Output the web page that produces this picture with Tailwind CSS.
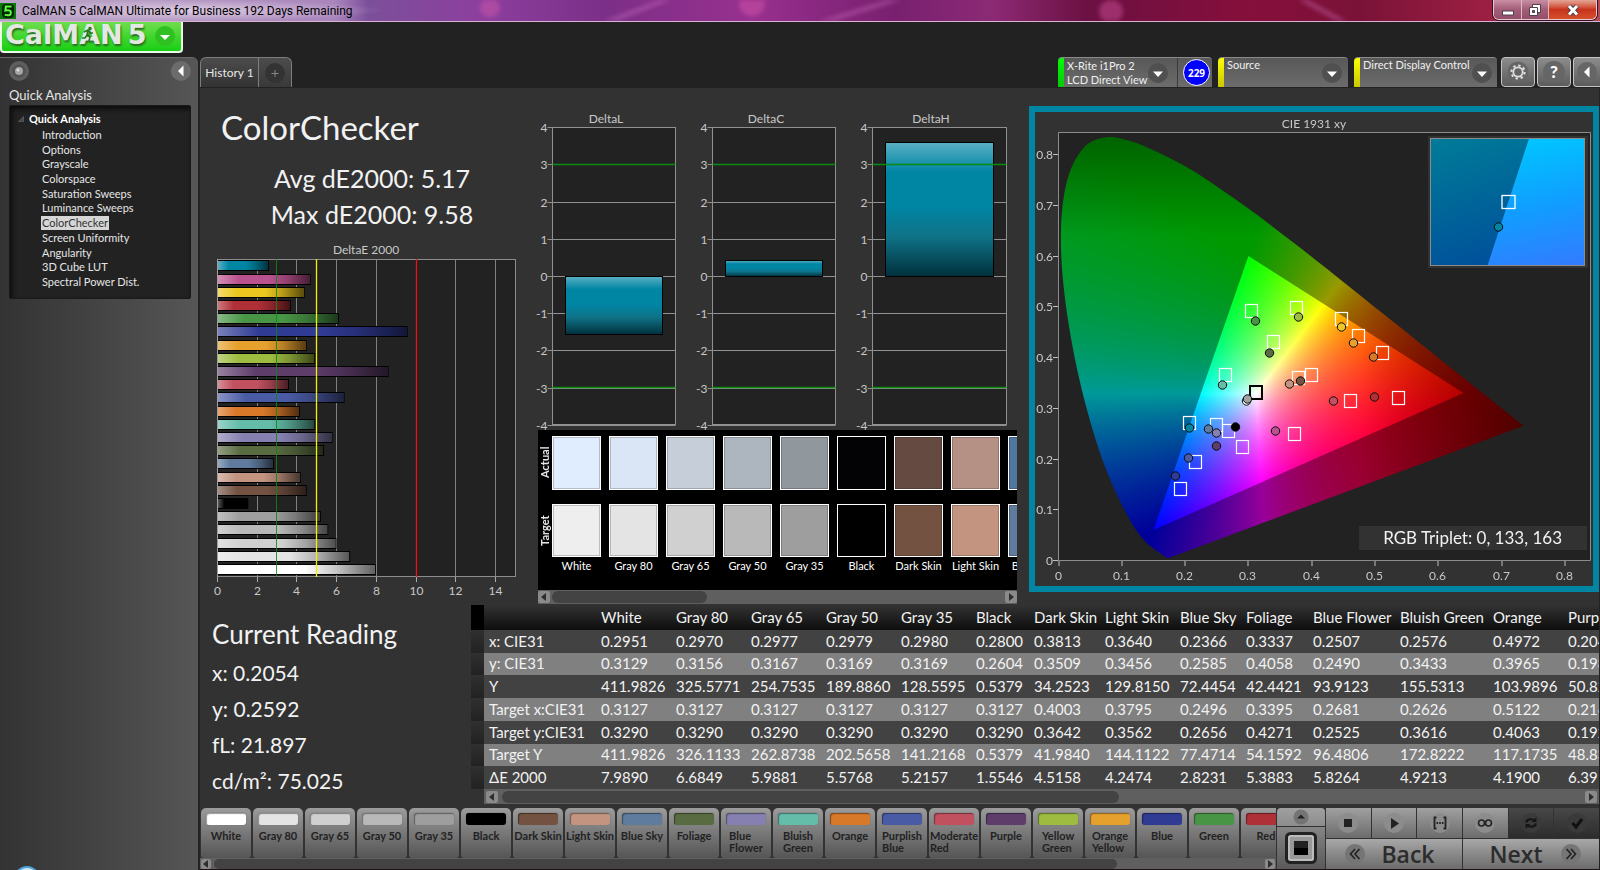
<!DOCTYPE html>
<html lang="en">
<head>
<meta charset="utf-8">
<title>CalMAN 5</title>
<script src="https://cdn.jsdelivr.net/npm/@tailwindcss/browser@4"></script>
</head>
<body class="flex min-h-screen flex-col overflow-x-hidden bg-[#222222] font-['Lato','Liberation_Sans',sans-serif] text-[#e6e6e6]">

<!-- window title bar -->
<header class="relative flex h-[22px] shrink-0 items-start justify-between overflow-hidden border-b border-[#d9b3d2] bg-[linear-gradient(90deg,#b9a3c4_0%,#b59bc4_10%,#a884bb_21%,#7c4f9a_23%,#8c3f9e_30%,#7c2f88_38%,#98308f_47%,#78206f_56%,#8c2a75_62%,#6c1042_68%,#860f3b_78%,#7a1238_85%,#9c1f42_93%,#b04a55_100%)]">
  <div class="flex h-[21px] items-center gap-1.5 bg-[radial-gradient(closest-side,#f0e2f0b0,#f0e2f000)] pr-8">
    <svg class="size-4" viewBox="0 0 16 16" aria-hidden="true"><rect width="16" height="16" fill="#0a7a0a"/><rect x="2" y="1" width="12" height="14" rx="4" fill="#032503"/><path d="M11.500 3.600H5.800L5.400 7.600q4-1.200 5.200.7 .9 3.700-2.300 4Q6.200 12.300 4.800 11.600" fill="none" stroke="#5cff3c" stroke-width="2"/></svg>
    <span class="font-['Roboto','Noto_Sans',sans-serif] text-[12px] leading-5 text-black">CalMAN 5 CalMAN Ultimate for Business 192 Days Remaining</span>
  </div>
  <svg class="absolute inset-0 h-full w-full blur-[2px]" viewBox="0 0 1600 22" preserveAspectRatio="none" aria-hidden="true">
    <g fill="none" stroke="#d070c0" stroke-opacity=".4" stroke-width="5"><path d="M605 24L670-2M820 24L900-2M1300-2L1345 24"/></g>
    <g fill="#e060b0" fill-opacity=".4"><circle cx="490" cy="8" r="10"/><circle cx="752" cy="4" r="13"/><circle cx="1111" cy="12" r="12"/></g>
  </svg>
  <div class="relative mr-[3px] flex h-5 overflow-hidden rounded-b-md border border-t-0 border-[#e8c8d0] shadow-[0_0_0_1px_#3a1020]">
    <button aria-label="Minimize" class="flex w-[28px] items-center justify-center border-r border-[#e0b8c4] bg-linear-to-b from-[#c98fa3] via-[#a35d78] to-[#93506b]"><svg class="h-4 w-4" viewBox="0 0 16 16"><rect x="2.500" y="9" width="11" height="4" fill="#fff" stroke="#50404a"/></svg></button>
    <button aria-label="Restore" class="flex w-[27px] items-center justify-center border-r border-[#e0b8c4] bg-linear-to-b from-[#c98fa3] via-[#a35d78] to-[#93506b]"><svg class="h-4 w-4" viewBox="0 0 16 16"><g fill="#fff" stroke="#50404a"><path d="M5.500 2.500h8v8h-8z"/><path d="M2.500 5.500h8v8h-8z"/><path d="M5.500 8.500h2v2h-2z" fill="#7a4a60"/></g></svg></button>
    <button aria-label="Close" class="flex w-[47px] items-center justify-center bg-linear-to-b from-[#e3a596] via-[#c8321c] to-[#d4502c]"><svg class="h-4 w-4" viewBox="0 0 16 16"><path d="M4 4l8 8.500M12 4l-8 8.500" stroke="#504048" stroke-width="5"/><path d="M4 4l8 8.500M12 4l-8 8.500" stroke="#fff" stroke-width="3"/></svg></button>
  </div>
</header>

<div class="h-[35px] shrink-0">
  <button aria-label="CalMAN 5 menu" class="relative flex h-[31px] w-[183px] items-center rounded-b-[4px] border-2 border-t-0 border-[#eafbe6] bg-linear-to-b from-[#6fdd4e] via-[#3fd62c] to-[#12cf12] pl-[3px] font-['DejaVu_Sans',sans-serif] text-[27px] leading-[31px] font-bold text-[#e4e8e2] [text-shadow:1px_2px_2px_#2a6a22]">
    <span class="-mt-1">CalMAN</span><span class="-mt-1 ml-[5px]">5</span>
    <svg class="absolute right-1.5 top-1 size-5" viewBox="0 0 20 20" aria-hidden="true"><circle cx="10" cy="10" r="10" fill="#2fc022"/><path d="M5 9h10l-5 5z" fill="#fff"/></svg>
    <svg class="absolute left-[80px] top-[4px] h-[17px] w-[12px]" viewBox="0 0 12 17" aria-hidden="true"><g fill="none" stroke="#1f7a1c" stroke-width="1.600"><circle cx="8" cy="2.500" r="1"/><path d="M2 6l4-2 2 3 3 0M6 4l-1 5 3 2-1 4M5 9l-2 3-3 0"/></g></svg>
  </button>
</div>

<div class="flex min-h-0 flex-1">
  <!-- workflow sidebar -->
  <aside class="relative mr-0.5 w-[198px] shrink-0 overflow-hidden rounded-tr-md border-t border-[#6a6a6a] bg-linear-to-r from-[#333333] to-[#565656] pr-[7px] pl-[9px]">
    <div class="flex justify-between pt-[3px]">
      <button aria-label="Options"><svg class="size-5" viewBox="0 0 20 20"><circle cx="10" cy="10" r="10" fill="#5e5e5e"/><circle cx="10" cy="10" r="6.500" fill="#505050"/><circle cx="10" cy="10" r="4" fill="#a5a5a5"/><circle cx="9" cy="9" r="1.500" fill="#ddd"/></svg></button>
      <button aria-label="Collapse panel"><svg class="size-5" viewBox="0 0 20 20"><circle cx="10" cy="10" r="10" fill="#6c6c6c"/><path d="M12.500 4.500v11L7 10z" fill="#fff"/></svg></button>
    </div>
    <h2 class="mt-1.5 text-[13px] leading-4">Quick Analysis</h2>
    <nav class="mt-0.5 rounded-xs border border-[#1a1a1a] bg-[#222222] pt-1 pb-[9px] shadow-[inset_2px_3px_5px_#0c0c0c] text-[11px] leading-[15px]">
      <div class="flex items-center text-[11px] font-bold leading-[18px] text-white"><svg class="ml-2 mr-[5px] size-1.5" viewBox="0 0 6 6" aria-hidden="true"><path d="M5.500 .5v5h-5z" fill="#444" stroke="#666" stroke-width=".7"/></svg>Quick Analysis</div>
      <ul id="tree" class="ml-[31px] flex h-[161px] flex-col items-start justify-between"></ul>
    </nav>
    <div class="absolute -bottom-[22px] left-3.5 size-[26px] rounded-full border-2 border-[#4aa0d8] bg-[#d8e8f0]"></div>
  </aside>

  <div class="flex min-w-0 flex-1 flex-col">
    <!-- tabs and device controls -->
    <div class="flex h-[31px] shrink-0 items-start justify-between">
      <div class="flex h-[30px]" role="tablist">
        <button role="tab" aria-selected="true" class="w-[59px] rounded-tl-md border border-b-0 border-[#7d7d7d] bg-linear-to-b from-[#4c4c4c] to-[#333333] text-[12px]">History 1</button>
        <button aria-label="Add tab" class="flex w-[33px] items-center justify-center rounded-tr-md border border-b-0 border-l-0 border-[#7d7d7d] bg-linear-to-b from-[#4c4c4c] to-[#393939]"><svg class="size-5" viewBox="0 0 20 20"><circle cx="10" cy="10" r="10" fill="#333"/><path d="M10 7v7M6.500 10.500h7" stroke="#888"/></svg></button>
      </div>
      <div class="flex items-start text-left text-[11px] leading-3.5 text-[#f0f0f0]">
        <div class="flex h-[30px] w-[154px] rounded-t-[4px] border-t border-[#8a8a8a] bg-linear-to-b from-[#585858] to-[#6c6c6c]">
          <div class="w-1.5 shrink-0 rounded-tl-[4px] bg-linear-to-b from-[#00ff00] to-[#08c808]"></div>
          <button class="flex w-[114px] items-center justify-between border-r border-[#3a3a3a] pl-[3px] pr-[9px] text-left whitespace-nowrap"><span>X-Rite i1Pro 2<br>LCD Direct View</span><svg class="-ml-1 size-5 shrink-0" viewBox="0 0 20 20" aria-hidden="true"><circle cx="10" cy="10" r="10" fill="#505050"/><path d="M5 8.500h10l-5 5.500z" fill="#fff"/></svg></button>
          <div class="flex flex-1 items-center justify-end pr-0.5"><span class="flex size-[27px] items-center justify-center rounded-full border border-white bg-[#0000ff] font-['Open_Sans',sans-serif] text-[10px] font-bold text-white">229</span></div>
        </div>
        <button class="ml-1.5 flex h-[30px] w-[130px] rounded-t-[4px] border-t border-[#8a8a8a] bg-linear-to-b from-[#585858] to-[#6c6c6c] text-left">
          <span class="h-full w-1.5 shrink-0 rounded-tl-[4px] bg-linear-to-b from-[#ffff00] to-[#c8c800]"></span><span class="flex-1 pl-[3px]">Source</span><svg class="mt-[5px] mr-1.5 size-5" viewBox="0 0 20 20" aria-hidden="true"><circle cx="10" cy="10" r="10" fill="#505050"/><path d="M5 8.500h10l-5 5.500z" fill="#fff"/></svg>
        </button>
        <button class="ml-1.5 flex h-[30px] w-[143px] rounded-t-[4px] border-t border-[#8a8a8a] bg-linear-to-b from-[#585858] to-[#6c6c6c] text-left whitespace-nowrap">
          <span class="h-full w-1.5 shrink-0 rounded-tl-[4px] bg-linear-to-b from-[#ffff00] to-[#c8c800]"></span><span class="w-[112px] pl-[3px]">Direct Display Control</span><svg class="mt-[5px] size-5 shrink-0" viewBox="0 0 20 20" aria-hidden="true"><circle cx="10" cy="10" r="10" fill="#505050"/><path d="M5 8.500h10l-5 5.500z" fill="#fff"/></svg>
        </button>
        <button aria-label="Settings" class="ml-[4px] flex h-[30px] w-[34px] items-center justify-center rounded-[4px] border border-[#c4c4c4] bg-linear-to-b from-[#8c8c8c] to-[#5c5c5c]"><svg class="size-[22px]" viewBox="0 0 22 22"><circle cx="11" cy="11" r="10.500" fill="#666"/><circle cx="11" cy="11" r="4.700" fill="none" stroke="#e0e0e0" stroke-width="1.800"/><circle cx="11" cy="11" r="6.600" fill="none" stroke="#e0e0e0" stroke-width="2" stroke-dasharray="2.400 2.784"/></svg></button>
        <button aria-label="Help" class="ml-0.5 flex h-[30px] w-[34px] items-center justify-center rounded-[4px] border border-[#c4c4c4] bg-linear-to-b from-[#8c8c8c] to-[#5c5c5c]"><span class="flex size-[22px] items-center justify-center rounded-full bg-[#666] text-[17px] font-black text-white">?</span></button>
        <button aria-label="Collapse controls" class="ml-0.5 flex h-[30px] w-[27px] items-center justify-center rounded-l-[4px] border border-r-0 border-[#c4c4c4] bg-linear-to-b from-[#8c8c8c] to-[#5c5c5c]"><svg class="size-5" viewBox="0 0 20 20"><circle cx="10" cy="10" r="10" fill="#666"/><path d="M12.500 4.500v11L7 10z" fill="#fff"/></svg></button>
      </div>
    </div>

    <main class="flex flex-1 flex-col border-r border-[#222] bg-[#323232]">
      <div class="grid grid-cols-[338fr_479fr_12fr_570fr] items-start">
        <!-- error summary -->
        <section class="pt-[19px]">
          <h1 class="pl-[21px] text-[33px] leading-10 text-[#f2f2f2]">ColorChecker</h1>
          <p class="mt-[13px] pl-[6px] text-center text-[25px] leading-9 text-[#f2f2f2]">Avg dE2000: 5.17<br>Max dE2000: 9.58</p>
          <svg id="de" class="mt-2 block h-auto w-full overflow-visible text-[12px]" viewBox="200 240 338 365" role="img" aria-label="DeltaE 2000 chart"></svg>
        </section>
        <!-- component deltas and swatches -->
        <section class="min-w-0 pt-3">
          <svg id="deltas" class="block h-auto w-full overflow-visible text-[12px]" viewBox="538 100 479 330" role="img" aria-label="DeltaL, DeltaC and DeltaH charts"></svg>
          <div class="flex h-40 overflow-hidden bg-black pt-1.5">
            <div class="flex w-3.5 shrink-0 flex-col gap-[15px] text-[11px] leading-3.5 font-bold">
              <span class="h-[53px] rotate-180 text-center [writing-mode:vertical-rl]">Actual</span>
              <span class="h-[53px] rotate-180 text-center [writing-mode:vertical-rl]">Target</span>
            </div>
            <div id="patches" class="flex gap-2"></div>
          </div>
          <div class="flex h-3.5 items-center bg-[#5f5f5f] text-[#2e2e2e]">
            <button aria-label="Scroll left" class="flex size-3 items-center justify-center rounded-xs bg-[#8a8a8a]"><svg class="size-2" viewBox="0 0 8 8"><path d="M6 0v8L1 4z" fill="currentColor"/></svg></button>
            <div class="ml-0.5 h-3 w-[155px] rounded-full bg-[#434343]"></div>
            <button aria-label="Scroll right" class="ml-auto flex size-3 items-center justify-center rounded-xs bg-[#8a8a8a]"><svg class="size-2" viewBox="0 0 8 8"><path d="M2 0v8l5-4z" fill="currentColor"/></svg></button>
          </div>
        </section>
        <div></div>
        <!-- chromaticity diagram -->
        <section class="mt-[18px] border-6 border-[#0085a3]">
          <div class="grid">
            <canvas id="gamut" width="558" height="474" class="h-auto w-full [grid-area:1/1]"></canvas>
            <svg id="cie" class="h-auto w-full text-[12px] [grid-area:1/1]" viewBox="1035 112 558 474" role="img" aria-label="CIE 1931 xy chart"></svg>
          </div>
        </section>
      </div>

      <div class="flex min-h-0">
        <section class="w-[271px] shrink-0 pt-[11px] pl-3">
          <h2 class="mb-[3px] text-[26px] leading-9 text-[#f2f2f2]">Current Reading</h2>
          <p class="text-[21px] leading-9 text-[#f2f2f2]">x: 0.2054<br>y: 0.2592<br>fL: 21.897<br>cd/m²: 75.025</p>
        </section>
        <section class="min-w-0 flex-1 overflow-hidden">
          <table class="w-[1200px] table-fixed border-collapse text-left text-[15px] leading-[21px] whitespace-nowrap text-[#f2f2f2]">
            <colgroup><col class="w-[13px]"><col class="w-[112px]"><col class="w-[75px]"><col class="w-[75px]"><col class="w-[75px]"><col class="w-[75px]"><col class="w-[75px]"><col class="w-[58px]"><col class="w-[71px]"><col class="w-[75px]"><col class="w-[66px]"><col class="w-[67px]"><col class="w-[87px]"><col class="w-[93px]"><col class="w-[75px]"><col></colgroup>
            <thead><tr id="thead" class="h-[25px] bg-linear-to-b from-[#333333] to-[#0e0e0e]"></tr></thead>
            <tbody id="tbody"></tbody>
          </table>
          <div class="ml-[13px] flex h-[15px] items-center bg-[#5f5f5f] px-0.5 text-[#2e2e2e]">
            <button aria-label="Scroll left" class="flex size-3 items-center justify-center rounded-xs bg-[#8a8a8a]"><svg class="size-2" viewBox="0 0 8 8"><path d="M6 0v8L1 4z" fill="currentColor"/></svg></button>
            <div class="ml-1 h-3 w-[617px] rounded-full bg-[#434343]"></div>
            <button aria-label="Scroll right" class="ml-auto flex size-3 items-center justify-center rounded-xs bg-[#8a8a8a]"><svg class="size-2" viewBox="0 0 8 8"><path d="M2 0v8l5-4z" fill="currentColor"/></svg></button>
          </div>
        </section>
      </div>

      <!-- pattern selector and transport -->
      <footer class="mt-auto flex h-[62px] border-b border-[#1c1418] bg-[#323232]">
        <div class="flex min-w-0 flex-1 flex-col overflow-hidden">
          <div id="patterns" class="flex h-[50px] gap-0.5 overflow-hidden pl-px"></div>
          <div class="flex h-[11px] items-center bg-[#5f5f5f] px-px text-[#2e2e2e]">
            <button aria-label="Scroll left" class="flex size-2.5 items-center justify-center rounded-xs bg-[#8a8a8a]"><svg class="size-2" viewBox="0 0 8 8"><path d="M6 0v8L1 4z" fill="currentColor"/></svg></button>
            <div class="ml-[3px] h-2.5 w-[903px] rounded-full bg-[#434343]"></div>
            <button aria-label="Scroll right" class="ml-auto flex size-2.5 items-center justify-center rounded-xs bg-[#8a8a8a]"><svg class="size-2" viewBox="0 0 8 8"><path d="M2 0v8l5-4z" fill="currentColor"/></svg></button>
          </div>
        </div>
        <div class="ml-px flex w-12 shrink-0 flex-col gap-px">
          <button aria-label="Expand" class="flex h-[18px] items-center justify-center rounded-t-[4px] bg-linear-to-b from-[#a0a0a0] to-[#8c8c8c]"><svg class="size-4" viewBox="0 0 16 16"><circle cx="8" cy="8" r="7.500" fill="#747474"/><path d="M4 9.500h8L8 5.500z" fill="#222"/></svg></button>
          <button aria-label="Pattern window" class="flex flex-1 items-center justify-center bg-linear-to-b from-[#858585] to-[#5a5a5a]"><svg class="size-8" viewBox="0 0 32 32"><rect x="1.500" y="1.500" width="29" height="29" rx="4" fill="#999" stroke="#222" stroke-width="3"/><rect x="4" y="4" width="24" height="24" rx="2" fill="none" stroke="#c8c8c8" stroke-width="1.500"/><rect x="9" y="9" width="14" height="14" fill="#000"/><path d="M9 9h14v7H9z" fill="#222"/></svg></button>
        </div>
        <div class="ml-px grid w-[273px] shrink-0 grid-rows-[30px_30px] gap-px">
          <div id="transport" class="grid grid-cols-6 gap-px"></div>
          <div class="grid grid-cols-2 gap-px font-['Open_Sans',sans-serif] text-[23px] leading-7 font-semibold text-[#2c2c2c]">
            <button class="flex items-center justify-center gap-4 bg-linear-to-b from-[#a8a8a8] to-[#6c6c6c] pr-2"><svg class="size-5" viewBox="0 0 20 20" aria-hidden="true"><circle cx="10" cy="10" r="10" fill="#757575"/><path d="M10 5l-4.500 5L10 15M14.500 5L10 10l4.500 5" fill="none" stroke="#222" stroke-width="1.600"/></svg>Back</button>
            <button class="flex items-center justify-center gap-[18px] bg-linear-to-b from-[#a8a8a8] to-[#6c6c6c] pl-2">Next<svg class="size-5" viewBox="0 0 20 20" aria-hidden="true"><circle cx="10" cy="10" r="10" fill="#757575"/><path d="M5.500 5L10 10l-4.500 5M10 5l4.500 5L10 15" fill="none" stroke="#222" stroke-width="1.600"/></svg></button>
          </div>
        </div>
      </footer>
    </main>
  </div>
</div>

<script>
const $ = id => document.getElementById(id);

$('tree').innerHTML = ['Introduction','Options','Grayscale','Colorspace','Saturation Sweeps','Luminance Sweeps','ColorChecker','Screen Uniformity','Angularity','3D Cube LUT','Spectral Power Dist.']
  .map(t => `<li class="leading-[14px]"><a href="#" class="${t === 'ColorChecker' ? 'block bg-[#d6d6d6] px-px text-[#333333]' : 'block px-px text-[#e6e6e6]'}">${t}</a></li>`).join('');

const PATCHES = [
  ['White','#ffffff'],['Gray 80','#e4e4e4'],['Gray 65','#d0d0d0'],['Gray 50','#b9b9b9'],['Gray 35','#9e9e9e'],['Black','#000000'],
  ['Dark Skin','#735242'],['Light Skin','#c39581'],['Blue Sky','#5f7b9d'],['Foliage','#596b41'],['Blue Flower','#8580b0'],['Bluish Green','#64bda9'],
  ['Orange','#d87829'],['Purplish Blue','#4a5ba5'],['Moderate Red','#c25160'],['Purple','#5e3d6b'],['Yellow Green','#9dbc40'],['Orange Yellow','#e6a02e'],
  ['Blue','#303b94'],['Green','#489546'],['Red','#b03038'],['Yellow','#ecc71f'],['Magenta','#bb5290'],['Cyan','#0085a3']];

/* DeltaE 2000 bar chart */
{
  const err = [7.98,6.68,5.99,5.58,5.21,1.55,4.5,4.2,2.85,5.37,5.8,4.92,4.16,6.4,3.6,8.62,4.92,4.5,9.58,6.12,3.7,4.4,4.7,2.6];
  const X = v => 217.5 + v * 19.85;
  let s = '<defs><linearGradient id="hi"><stop offset="0" stop-color="#fff" stop-opacity=".35"/><stop offset=".22" stop-color="#fff" stop-opacity="0"/><stop offset=".55" stop-color="#000" stop-opacity="0"/><stop offset=".75" stop-color="#000" stop-opacity=".22"/><stop offset="1" stop-color="#000" stop-opacity=".62"/></linearGradient></defs>';
  s += '<rect x="217.5" y="259.5" width="298" height="317" fill="#222" stroke="#8c8c8c"/>';
  for (let v = 0; v <= 14; v += 2) {
    const x = Math.floor(X(v)) + .5;
    s += `<path d="M${x} 259V576" stroke="#808080"/><path d="M${x} 577v5" stroke="#aaa"/><text x="${x}" y="595" text-anchor="middle" fill="#c8c8c8">${v}</text>`;
  }
  PATCHES.forEach(([, c], i) => {
    const y = Math.round(569 - i * 13.2) - 4.5, w = X(err[i]) - 218;
    s += `<rect x="217.5" y="${y}" width="${w}" height="10" fill="${c}" stroke="#000"/><rect x="218" y="${y + .5}" width="${w - 1}" height="9" fill="url(#hi)"/>`;
  });
  s += '<path d="M276.500 259V577" stroke="#0a8a10" stroke-opacity=".85"/><path d="M316.500 259V577" stroke="#f4f000" stroke-width="1.300"/><path d="M416.500 259V577" stroke="#f01010" stroke-width="1.300"/><path d="M217.500 259V577" stroke="#a0a0a0"/>';
  s += '<text x="366" y="254" text-anchor="middle" fill="#c8c8c8">DeltaE 2000</text>';
  $('de').innerHTML = s;
}

/* DeltaL / DeltaC / DeltaH */
{
  const plots = [['DeltaL',606,552.5,675.5,-1.56],['DeltaC',766,712.5,835.5,.43],['DeltaH',931,872.5,1006.5,3.6]];
  let s = '<defs><linearGradient id="teal" x2="0" y2="1"><stop offset="0" stop-color="#5ab0c4"/><stop offset=".22" stop-color="#0085a3"/><stop offset=".48" stop-color="#0085a3"/><stop offset=".7" stop-color="#0f7388"/><stop offset="1" stop-color="#00303c"/></linearGradient></defs>';
  const Y = v => Math.round(276 - v * 37.2) + .5;
  for (const [name, tx, x0, x1, val] of plots) {
    s += `<text x="${tx}" y="123" text-anchor="middle" fill="#c8c8c8">${name}</text><rect x="${x0}" y="127.500" width="${x1 - x0}" height="297" fill="#222"/>`;
    for (let v = -4; v <= 4; v++) s += `<path d="M${x0 - 5} ${Y(v)}H${x1}" stroke="#909090"/><text x="${x0 - 5}" y="${Y(v) + 4}" text-anchor="end" fill="#c8c8c8">${v}</text>`;
    s += `<rect x="${x0}" y="127.500" width="${x1 - x0}" height="297" fill="none" stroke="#909090"/>`;
    s += `<rect x="${x0 + 13}" y="${Math.min(Y(val), Y(0))}" width="${x1 - x0 - 26}" height="${Math.abs(Y(val) - Y(0))}" fill="url(#teal)" stroke="#000"/>`;
    s += `<path d="M${x0} 164.500H${x1}M${x0} 387.500H${x1}" stroke="#0a8a10" stroke-width="1.400"/>`;
  }
  $('deltas').innerHTML = s;
}

/* actual / target swatches */
{
  const actual = ['#e0edff','#dae6f5','#c6cfd9','#adb5bf','#90989e','#030306','#644a40','#b59084','#50789f'];
  $('patches').innerHTML = actual.map((a, i) => `<div class="w-[49px] shrink-0 text-center text-[11px] leading-4 whitespace-nowrap text-white">
    <div class="h-[54px] border border-white shadow-[inset_0_0_0_1px_#0003]" style="background:${a}"></div><div class="mt-3.5 h-[53px] border border-white shadow-[inset_0_0_0_1px_#0003]" style="background:${i ? PATCHES[i][1] : '#eeeeee'}"></div><div class="flex justify-center pt-px">${PATCHES[i][0]}</div></div>`).join('');
}

/* chromaticity diagram */
const PX = x => 1058.5 + x * 633, PY = y => 560.5 - y * 507.5;
{
  const locus = [[.1741,.005],[.1689,.0069],[.1644,.0109],[.1566,.0177],[.144,.0297],[.1355,.0399],[.1241,.0578],[.1096,.0868],[.0913,.1327],[.0687,.2007],[.0454,.295],[.0235,.4127],[.0082,.5384],[.0039,.6548],[.0139,.7502],[.0389,.812],[.0743,.8338],[.1142,.8262],[.1547,.8059],[.1929,.7816],[.2296,.7543],[.3016,.6923],[.3731,.6245],[.4441,.5547],[.5125,.4866],[.5752,.4242],[.627,.3725],[.6658,.334],[.6915,.3083],[.719,.2809],[.7347,.2653]];
  const W = 558, H = 474;
  const layer = gain => {
    const c = document.createElement('canvas'); c.width = W; c.height = H;
    const g = c.getContext('2d'), im = g.createImageData(W, H);
    for (let j = 0; j < H; j++) for (let i = 0; i < W; i++) {
      const x = (i + 1035.5 - 1058.5) / 633, y = Math.max(.002, (560.5 - j - 112.5) / 507.5);
      const A = x / y, C = (1 - x - y) / y;
      let r = Math.max(0, 3.2406 * A - 1.5372 - .4986 * C), gr = Math.max(0, -.9689 * A + 1.8758 + .0415 * C), b = Math.max(0, .0557 * A - .204 + 1.057 * C);
      let k = 255 * gain / Math.max(r, gr, b, 1e-6);
      if (x > .48) k *= Math.max(.45, 1 - 1.9 * (x - .48));
      if (y > .64) k *= 1 - 1.8 * (y - .64);
      im.data.set([r * k, gr * k, b * k, 255], (j * W + i) * 4);
    }
    g.putImageData(im, 0, 0);
    return c;
  };
  const g = $('gamut').getContext('2d');
  g.fillStyle = '#222'; g.fillRect(23, 21, 533, 428);
  const P = locus.map(([x, y]) => [PX(x) - 1035, PY(y) - 112]);
  g.save(); g.beginPath(); g.moveTo(...P[0]);
  for (let i = 0; i < P.length - 1; i++) {
    const a = P[Math.max(0, i - 1)], b = P[i], c = P[i + 1], d = P[Math.min(P.length - 1, i + 2)];
    g.bezierCurveTo(b[0] + (c[0] - a[0]) / 6, b[1] + (c[1] - a[1]) / 6, c[0] - (d[0] - b[0]) / 6, c[1] - (d[1] - b[1]) / 6, c[0], c[1]);
  }
  g.closePath(); g.clip(); g.drawImage(layer(.6), 0, 0); g.restore();
  g.save(); g.beginPath();
  [[.64,.33],[.3,.6],[.15,.06]].forEach(([x, y]) => g.lineTo(PX(x) - 1035, PY(y) - 112));
  g.closePath(); g.clip(); g.drawImage(layer(1), 0, 0); g.restore();

  let s = '<defs><linearGradient id="in" x1="0" y1="0" x2=".4" y2="1"><stop offset="0" stop-color="#007c98"/><stop offset="1" stop-color="#00509a"/></linearGradient><linearGradient id="out" gradientUnits="userSpaceOnUse" x1="1529" y1="138" x2="1560" y2="272"><stop offset="0" stop-color="#00c6ff"/><stop offset=".5" stop-color="#109eff"/><stop offset="1" stop-color="#347aff"/></linearGradient></defs>';
  s += '<path d="M1058.500 560.500V132.500H1590.500V560.500z" fill="none" stroke="#8c8c8c"/><text x="1314" y="128" text-anchor="middle" fill="#c8c8c8">CIE 1931 xy</text>';
  for (let v = 0; v <= 8; v++) {
    const t = v ? '0.' + v : '0', x = Math.round(PX(v / 10)) + .5, y = Math.round(PY(v / 10) - .5) + .5;
    s += `<path d="M${x - .5} 561v5M1053 ${y}h5" stroke="#c0c0c0"/><text x="${x - 1}" y="580" text-anchor="middle" fill="#c8c8c8">${t}</text><text x="1053" y="${y + 4}" text-anchor="end" fill="#c8c8c8">${t}</text>`;
  }
  [[1251,311],[1296,308],[1273,342],[1341,319],[1358,336],[1382,353],[1225,375],[1298,378],[1311,375],[1350,401],[1398,398],[1189,423],[1216,425],[1228,431],[1242,447],[1294,434],[1195,462],[1180,489]]
    .forEach(([x, y]) => s += `<rect x="${x - 5.5}" y="${y - 6.5}" width="12" height="13" fill="none" stroke="#fff" stroke-width="1.200"/>`);
  s += '<rect x="1250" y="386" width="12" height="13" fill="none" stroke="#000" stroke-width="2"/>';
  [[1255,321,'#489546'],[1298,317,'#9dbc40'],[1341,327,'#ecc71f'],[1353,343,'#e6a02e'],[1373,357,'#d87829'],[1269,353,'#596b41'],[1222,385,'#64bda9'],[1289,384,'#c39581'],[1300,381,'#735242'],[1333,401,'#c25160'],[1374,397,'#b03038'],[1275,431,'#bb5290'],[1235,427,'#000'],[1246,401,'#fff'],[1247,399,'#a0a0a0'],[1208,429,'#5f7b9d'],[1216,433,'#8580b0'],[1216,446,'#5e3d6b'],[1188,458,'#4a5ba5'],[1175,476,'#303b94'],[1189,428,'#0085a3']]
    .forEach(([x, y, c]) => s += `<circle cx="${x + .5}" cy="${y}" r="4.200" fill="${c}" stroke="#0a0a0a"/>`);
  s += '<rect x="1428" y="136" width="160" height="132" fill="#323232"/><rect x="1430.500" y="138.500" width="154" height="127" fill="url(#in)"/><path d="M1529 138.500H1584.500V265.500H1487.500z" fill="url(#out)"/><rect x="1430.500" y="138.500" width="154" height="127" fill="none" stroke="#8c8c8c"/><rect x="1502" y="195.500" width="13" height="13" fill="none" stroke="#fff" stroke-width="1.300"/><circle cx="1498.500" cy="227" r="4.200" fill="#0085a3" stroke="#0a0a0a"/>';
  s += '<rect x="1359" y="526" width="228" height="24" fill="#323232"/><text x="1562" y="544" text-anchor="end" fill="#f2f2f2" class="text-[17px]">RGB Triplet: 0, 133, 163</text>';
  $('cie').innerHTML = s;
}

/* readings table */
{
  const rows = [
    ['x: CIE31','0.2951','0.2970','0.2977','0.2979','0.2980','0.2800','0.3813','0.3640','0.2366','0.3337','0.2507','0.2576','0.4972','0.2042'],
    ['y: CIE31','0.3129','0.3156','0.3167','0.3169','0.3169','0.2604','0.3509','0.3456','0.2585','0.4058','0.2490','0.3433','0.3965','0.1983'],
    ['Y','411.9826','325.5771','254.7535','189.8860','128.5595','0.5379','34.2523','129.8150','72.4454','42.4421','93.9123','155.5313','103.9896','50.8215'],
    ['Target x:CIE31','0.3127','0.3127','0.3127','0.3127','0.3127','0.3127','0.4003','0.3795','0.2496','0.3395','0.2681','0.2626','0.5122','0.2161'],
    ['Target y:CIE31','0.3290','0.3290','0.3290','0.3290','0.3290','0.3290','0.3642','0.3562','0.2656','0.4271','0.2525','0.3616','0.4063','0.1923'],
    ['Target Y','411.9826','326.1133','262.8738','202.5658','141.2168','0.5379','41.9840','144.1122','77.4714','54.1592','96.4806','172.8222','117.1735','48.8319'],
    ['ΔE 2000','7.9890','6.6849','5.9881','5.5768','5.2157','1.5546','4.5158','4.2474','2.8231','5.3883','5.8264','4.9213','4.1900','6.3912']];
  $('thead').innerHTML = '<td class="bg-black"></td><td></td>' + PATCHES.slice(0, 14).map(p => `<th scope="col" class="pl-[5px] font-normal">${p[0]}</th>`).join('');
  $('tbody').innerHTML = rows.map((r, i) => `<tr class="${i === 1 || i === 5 ? 'h-[22px] bg-[#808080]' : i === 3 ? 'h-[23px] bg-[#808080]' : 'h-[23px] bg-[#424242]'}"><td class="bg-linear-to-b from-[#303030] to-[#222222]"></td>` +
    r.map((c, j) => j ? `<td class="pb-px pl-[5px]">${c}</td>` : `<th scope="row" class="pb-px pl-[5px] font-normal">${c}</th>`).join('') + '</tr>').join('');
}

/* pattern buttons */
$('patterns').innerHTML = PATCHES.slice(0, 21).map(([n, c]) => `<button class="flex w-[50px] shrink-0 flex-col items-center rounded-t-[5px] rounded-b-[3px] bg-linear-to-b from-[#9c9c9c] to-[#565656] pt-[5px] text-[11px] leading-3 font-bold text-[#222222]">
  <span class="h-3 w-10 rounded-[3px] shadow-[inset_1px_1px_1px_#0006,0_0_0_1px_#7775]" style="background:${c}"></span><span class="${/^(Dark|Light|Blue S|Gray)/.test(n) ? 'mt-[5px] whitespace-nowrap' : 'mt-[5px] w-min text-left'}">${n}</span></button>`).join('');

/* transport buttons */
{
  const icons = [
    ['Stop','<path d="M6 6h8v8H6z" fill="#222"/>'],
    ['Play','<path d="M7 5l8 5.500L7 16z" fill="#222"/>'],
    ['Read series','<path d="M6.500 4.500H4.500v11h2M13.500 4.500h2v11h-2" fill="none" stroke="#222" stroke-width="1.800"/><path d="M6.500 10h7" stroke="#222" stroke-width="2" stroke-dasharray="1.600 1.100"/>'],
    ['Read continuously','<g fill="none" stroke="#222" stroke-width="1.600"><circle cx="6.500" cy="10" r="3"/><circle cx="13.500" cy="10" r="3"/></g>'],
    ['Refresh','<g fill="none" stroke="#161616" stroke-width="2.200"><path d="M5 9.500a5 4 0 0 1 9-1.500M15 10.500a5 4 0 0 1-9 1.500"/></g><path d="M15.500 4v5h-5zM4.500 16v-5h5z" fill="#161616"/>'],
    ['Accept','<path d="M5.500 10l3.500 4 6-8" fill="none" stroke="#111" stroke-width="3"/>']];
  $('transport').innerHTML = icons.map(([l, p], i) => `<button aria-label="${l}" class="${i < 4 ? 'flex items-center justify-center bg-linear-to-b from-[#a0a0a0] to-[#6c6c6c]' : 'flex items-center justify-center bg-linear-to-b from-[#484848] to-[#2c2c2c]'}"><svg class="size-5" viewBox="0 0 20 20"><circle cx="10" cy="10" r="10" fill="${i < 4 ? '#8c8c8c' : '#3a3a3a'}"/>${p}</svg></button>`).join('');
}
</script>
</body>
</html>
